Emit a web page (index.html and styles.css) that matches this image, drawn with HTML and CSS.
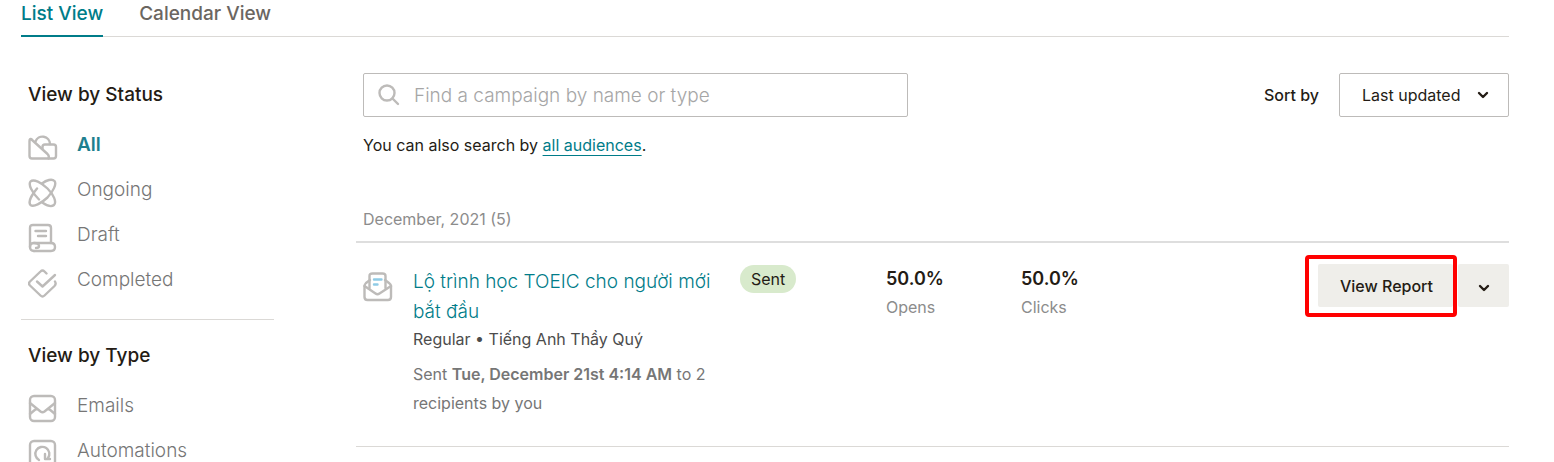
FILE: index.html
```html
<!DOCTYPE html>
<html lang="en">

<head>
    <meta charset="UTF-8">
    <meta name="viewport" content="width=device-width, initial-scale=1.0">
    <title>Campaigns</title>
    <link rel="stylesheet" href="styles.css">
</head>

<body>
    <nav class="tabs">
        <a class="tab active" href="#list">List View</a>
        <a class="tab" href="#calendar">Calendar View</a>
    </nav>

    <div class="layout">
        <aside class="sidebar">
            <section class="filter">
                <h2>View by Status</h2>
                <ul>
                    <li>
                        <a class="current" href="#all">
                            <svg class="icon" viewBox="0 0 30 30">
                                <path d="M3.500 6.500Q1.500 5 1.500 8V23Q1.500 25.500 4 25.500H25.500Q28 25.500 28 23V14Q28 11.500 25.500 11.500H17Q14.500 11.500 14.500 14V16" />
                                <path d="M3 6L19.500 21Q21.500 23 20.500 25.500" />
                                <path d="M7.500 8.500A7.500 7.500 0 0 1 22 11" />
                            </svg>
                            All
                        </a>
                    </li>
                    <li>
                        <a href="#ongoing">
                            <svg class="icon" viewBox="0 0 30 30">
                                <path d="M11 21.500C4 14.500 0 6.500 2.500 3.500C5.500 0.500 13.500 4.500 19.500 10.500C25.500 16.500 29 24 26 27C23 29.500 18 27 15 25" />
                                <path d="M14 5.500C18.500 2 24 0.500 26.500 3C29 6 25 13.500 19.500 19.500C13 25.500 5.500 29.500 2.500 27C0 24 3.500 17 9 10.500" />
                            </svg>
                            Ongoing
                        </a>
                    </li>
                    <li>
                        <a href="#draft">
                            <svg class="icon" viewBox="0 0 30 30">
                                <path d="M6 28Q2 28 2 24V5Q2 2 5 2H20Q23 2 23 5V20" />
                                <path d="M2 24Q2 20 6 20H23Q27 20 27 24Q27 28 23 28H6" />
                                <path d="M6 20Q11 20 11 23Q11 25 8 25" />
                                <path d="M7.500 8H18M10 13H18" />
                            </svg>
                            Draft
                        </a>
                    </li>
                    <li>
                        <a href="#completed">
                            <svg class="icon" viewBox="0 0 30 30">
                                <path d="M18.500 5.500L16.500 3.500Q14.500 1.500 12.500 3.500L2 13.500Q0 15.500 2 17.500L12.500 27.500Q14.500 29.500 16.500 27.500L26.500 18Q28.500 16 27 13.500" />
                                <path d="M9 13.500L14.500 18.500L27 7" />
                            </svg>
                            Completed
                        </a>
                    </li>
                </ul>
            </section>

            <section class="filter">
                <h2>View by Type</h2>
                <ul>
                    <li>
                        <a href="#emails">
                            <svg class="icon" viewBox="0 0 30 30">
                                <rect x="2" y="2" width="25" height="25" rx="4" />
                                <path d="M2 9L12.500 17.500Q14.500 19 16.500 17.500L27 9M2 20L8.500 14.500M27 20L20.500 14.500" />
                            </svg>
                            Emails
                        </a>
                    </li>
                    <li>
                        <a href="#automations">
                            <svg class="icon" viewBox="0 0 30 30">
                                <rect x="2" y="2" width="25" height="25" rx="4" />
                                <path d="M11 21A7 7 0 1 1 20 19M17 15V20H22" />
                            </svg>
                            Automations
                        </a>
                    </li>
                </ul>
            </section>
        </aside>

        <main class="content">
            <div class="toolbar">
                <div class="search">
                    <svg viewBox="0 0 22 22">
                        <circle cx="9" cy="9" r="7.500" />
                        <path d="M14.500 14.500L20 20" />
                    </svg>
                    <input type="search" id="search" aria-label="Find a campaign" placeholder="Find a campaign by name or type">
                </div>
                <div class="sort">
                    <label for="sort">Sort by</label>
                    <div class="select">
                        <select id="sort">
                            <option>Last updated</option>
                        </select>
                        <svg class="chevron" viewBox="0 0 12 8">
                            <path d="M2 2L6 6L10 2" />
                        </svg>
                    </div>
                </div>
            </div>
            <p class="hint">You can also search by <a href="#audiences">all audiences</a>.</p>

            <h3 class="month">December, 2021 (5)</h3>

            <article class="campaign">
                <svg class="icon" viewBox="0 0 30 30">
                    <path d="M7 8L3 11Q1.500 12.500 1.500 14V25Q1.500 28 4.500 28H25Q28 28 28 25V14Q28 12.500 26 11L22 8" />
                    <path d="M6.500 16V4Q6.500 1.500 9.500 1.500H19.500Q22.500 1.500 22.500 4V16" />
                    <path d="M1.500 14L12.500 21.500Q14.500 23 16.500 21.500L28 14" />
                    <path class="letter" d="M11 7.500H18.500M11 12.500H14.500" />
                </svg>
                <div class="details">
                    <a class="name" href="#campaign">Lộ trình học TOEIC cho người mới bắt đầu</a>
                    <p class="audience">Regular • Tiếng Anh Thầy Quý</p>
                    <p class="sent">Sent <b>Tue, December 21st 4:14 AM</b> to 2 recipients by you</p>
                </div>
                <div class="status"><span class="badge">Sent</span></div>
                <div class="stat"><strong>50.0%</strong>Opens</div>
                <div class="stat"><strong>50.0%</strong>Clicks</div>
                <div class="actions">
                    <div class="highlight">
                        <button class="btn" type="button">View Report</button>
                    </div>
                    <button class="btn btn-more" type="button" aria-label="More actions">
                        <svg class="chevron" viewBox="0 0 12 8">
                            <path d="M2 2L6 6L10 2" />
                        </svg>
                    </button>
                </div>
            </article>
        </main>
    </div>
</body>

</html>
```
FILE: styles.css
```css
* {
    box-sizing: border-box;
}

body {
    margin: 0;
    padding: 0 45px 0 21px;
    background-color: #fff;
    color: #241c15;
    font-family: Inter, "Liberation Sans", Arial, sans-serif;
    font-size: 16px;
    line-height: 28px;
}

h2,
h3,
p,
ul {
    margin: 0;
    padding: 0;
}

a {
    color: #007c89;
    text-decoration: none;
}

svg {
    fill: none;
    stroke: #bdbbb9;
    stroke-width: 2.4;
    stroke-linecap: round;
    stroke-linejoin: round;
}

.icon {
    width: 30px;
    height: 30px;
    flex: none;
}

.chevron {
    width: 12px;
    height: 8px;
    stroke: #241c15;
}

.tabs {
    display: flex;
    gap: 36px;
    border-bottom: 1px solid #dbd9d6;
}

.tab {
    height: 37px;
    margin-bottom: -1px;
    color: #6b6661;
    font-size: 19px;
    font-weight: 500;
}

.tab.active {
    color: #007c89;
    border-bottom: 2px solid #007c89;
}

.layout {
    display: flex;
    gap: 82px;
    padding-top: 36px;
}

/* sidebar */

.sidebar {
    flex: none;
    width: 253px;
}

.filter {
    padding: 8px 7px 16px;
}

.filter + .filter {
    border-top: 1px solid #dbd9d6;
    padding-top: 22px;
}

.filter h2 {
    margin-bottom: 14px;
    font-size: 19px;
    font-weight: 500;
}

.filter ul {
    list-style: none;
}

.filter li a {
    display: flex;
    align-items: flex-start;
    gap: 19px;
    height: 45px;
    padding-top: 8px;
    color: #767676;
    font-size: 19px;
    font-weight: 300;
}

.filter .icon {
    margin-top: 2px;
}

.filter li .current {
    color: #1f7f8f;
    font-weight: 600;
}

/* campaign list */

.content {
    flex: 1;
}

.toolbar {
    display: flex;
    justify-content: space-between;
    padding-left: 7px;
}

.search {
    display: flex;
    align-items: center;
    gap: 14px;
    width: 545px;
    height: 44px;
    padding: 0 14px;
    border: 1px solid #bdbbb9;
    border-radius: 2px;
}

.search svg {
    width: 22px;
    height: 22px;
}

.search input {
    flex: 1;
    padding: 0;
    border: 0;
    outline: none;
    font-family: inherit;
    font-size: 19px;
    font-weight: 300;
}

.search input::placeholder {
    color: #a6a6a6;
}

.sort {
    display: flex;
    align-items: center;
    gap: 20px;
}

.sort label {
    font-weight: 500;
}

.select {
    position: relative;
}

.select select {
    appearance: none;
    width: 170px;
    height: 44px;
    padding: 0 40px 0 22px;
    border: 1px solid #bdbbb9;
    border-radius: 2px;
    background-color: #fff;
    color: #241c15;
    font-family: inherit;
    font-size: 16px;
}

.select .chevron {
    position: absolute;
    top: 18px;
    right: 20px;
    pointer-events: none;
}

.hint {
    padding: 14px 7px 0;
}

.hint a {
    text-decoration: underline;
    text-underline-offset: 4px;
}

.month {
    margin-top: 46px;
    padding: 0 7px 8px;
    border-bottom: 2px solid #dedede;
    color: #8c8c8c;
    font-size: 16px;
    font-weight: 400;
}

.campaign {
    display: grid;
    grid-template-columns: 50px 327px 146px 135px 1fr auto;
    align-items: start;
    padding: 21px 0 28px 7px;
    border-bottom: 1px solid #dbd9d6;
}

.campaign .icon {
    margin-top: 8px;
}

.campaign .letter {
    stroke: #8fcbe6;
}

.details {
    padding: 2px 15px 0 0;
}

.name {
    display: block;
    padding-top: 1px;
    font-size: 19px;
    font-weight: 300;
    line-height: 30px;
}

.audience {
    line-height: 24px;
    color: #4c4c4c;
}

.sent {
    margin-top: 9px;
    color: #767676;
    line-height: 29px;
}

.sent b {
    font-weight: 600;
}

.status,
.stat {
    padding-top: 1px;
}

.badge {
    display: inline-block;
    padding: 0 11px;
    border-radius: 14px;
    background-color: #d8eacc;
}

.stat {
    color: #8c8c8c;
}

.stat strong {
    display: block;
    color: #241c15;
    font-size: 18px;
    font-weight: 600;
}

.actions {
    display: flex;
    gap: 5px;
}

.btn {
    height: 43px;
    margin: 0;
    padding: 0 20px 0 22px;
    border: 0;
    border-radius: 2px;
    background-color: #efeeea;
    color: #241c15;
    font-family: inherit;
    font-size: 16px;
    font-weight: 500;
}

.btn-more {
    width: 51px;
    padding: 0;
}

/* outline drawn round the report button */
.highlight {
    position: relative;
    display: flex;
}

.highlight::after {
    content: "";
    position: absolute;
    top: -9px;
    right: -4px;
    bottom: -10px;
    left: -13px;
    border: 4px solid #f00;
    border-radius: 4px;
    pointer-events: none;
}
```
